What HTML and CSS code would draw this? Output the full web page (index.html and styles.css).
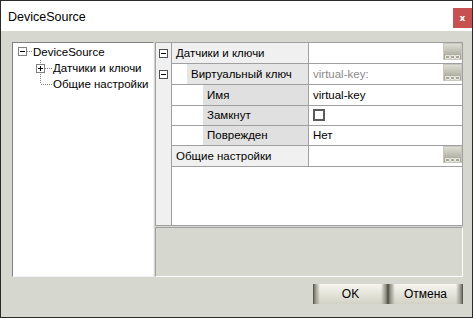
FILE: index.html
```html
<!DOCTYPE html>
<html>
<head>
<meta charset="utf-8">
<link rel="stylesheet" href="styles.css">
</head>
<body>
<div class="window">
  <div class="titlebar">
    <span class="title">DeviceSource</span>
    <div class="close">x</div>
  </div>
  <div class="content">
    <div class="panes">
      <div class="tree">
        <div class="node root">
          <svg class="conn" width="15" height="16" viewBox="0 0 15 16">
            <rect x="0.5" y="3.5" width="8" height="8" fill="#fff" stroke="#808080"/>
            <path d="M2 7.5h5" stroke="#000"/>
            <path d="M9 7.5h5" stroke="#808080" stroke-dasharray="1 1"/>
          </svg>
          <span class="label">DeviceSource</span>
        </div>
        <div class="node child">
          <svg class="conn" width="16" height="16" viewBox="0 0 16 16">
            <path d="M4.5 0v16" stroke="#808080" stroke-dasharray="1 1"/>
            <path d="M9 8.5h7" stroke="#808080" stroke-dasharray="1 1"/>
            <rect x="0.5" y="4.5" width="8" height="8" fill="#fff" stroke="#808080"/>
            <path d="M2 8.5h5M4.5 6v5" stroke="#000"/>
          </svg>
          <span class="label">Датчики и ключи</span>
        </div>
        <div class="node child">
          <svg class="conn" width="16" height="16" viewBox="0 0 16 16">
            <path d="M4.5 0v8" stroke="#808080" stroke-dasharray="1 1"/>
            <path d="M5 8.5h11" stroke="#808080" stroke-dasharray="1 1"/>
          </svg>
          <span class="label">Общие настройки</span>
        </div>
      </div>
      <div class="right">
        <div class="grid">
          <div class="row">
            <div class="gut"><span class="box"></span></div>
            <div class="cells">
              <div class="name"><span class="lbl cat">Датчики и ключи</span></div>
              <div class="val"><span class="vtext"></span>
                <svg class="ell" width="19" height="17" viewBox="0 0 19 17"><defs><linearGradient id="g1" x1="0" y1="0" x2="0" y2="1"><stop offset="0" stop-color="#e2e2da"/><stop offset="1" stop-color="#9a9a8a"/></linearGradient></defs><rect width="19" height="17" fill="url(#g1)"/><rect x="0.5" y="0.5" width="18" height="16" fill="none" stroke="#c8c8c0"/><path d="M2.5 12.5h4v3h-4zM7.5 12.5h4v3h-4zM12.5 12.5h4v3h-4z" fill="none" stroke="#e8e8e0"/></svg>
              </div>
            </div>
          </div>
          <div class="row">
            <div class="gut"><span class="box"></span></div>
            <div class="cells">
              <div class="name"><span class="indent i1"></span><span class="lbl sub">Виртуальный ключ</span></div>
              <div class="val"><span class="vtext muted">virtual-key:</span>
                <svg class="ell" width="19" height="17" viewBox="0 0 19 17"><defs><linearGradient id="g2" x1="0" y1="0" x2="0" y2="1"><stop offset="0" stop-color="#e2e2da"/><stop offset="1" stop-color="#9a9a8a"/></linearGradient></defs><rect width="19" height="17" fill="url(#g2)"/><rect x="0.5" y="0.5" width="18" height="16" fill="none" stroke="#c8c8c0"/><path d="M2.5 12.5h4v3h-4zM7.5 12.5h4v3h-4zM12.5 12.5h4v3h-4z" fill="none" stroke="#e8e8e0"/></svg>
              </div>
            </div>
          </div>
          <div class="row">
            <div class="gut"></div>
            <div class="cells">
              <div class="name"><span class="indent i2"></span><span class="lbl leaf">Имя</span></div>
              <div class="val"><span class="vtext">virtual-key</span></div>
            </div>
          </div>
          <div class="row short">
            <div class="gut"></div>
            <div class="cells">
              <div class="name"><span class="indent i2"></span><span class="lbl leaf">Замкнут</span></div>
              <div class="val"><span class="check"></span></div>
            </div>
          </div>
          <div class="row short">
            <div class="gut"></div>
            <div class="cells">
              <div class="name"><span class="indent i2"></span><span class="lbl leaf">Поврежден</span></div>
              <div class="val"><span class="vtext">Нет</span></div>
            </div>
          </div>
          <div class="row">
            <div class="gut"></div>
            <div class="cells">
              <div class="name"><span class="lbl cat">Общие настройки</span></div>
              <div class="val"><span class="vtext"></span>
                <svg class="ell" width="19" height="17" viewBox="0 0 19 17"><defs><linearGradient id="g3" x1="0" y1="0" x2="0" y2="1"><stop offset="0" stop-color="#e2e2da"/><stop offset="1" stop-color="#9a9a8a"/></linearGradient></defs><rect width="19" height="17" fill="url(#g3)"/><rect x="0.5" y="0.5" width="18" height="16" fill="none" stroke="#c8c8c0"/><path d="M2.5 12.5h4v3h-4zM7.5 12.5h4v3h-4zM12.5 12.5h4v3h-4z" fill="none" stroke="#e8e8e0"/></svg>
              </div>
            </div>
          </div>
          <div class="filler">
            <div class="gut"></div>
            <div class="blank"></div>
          </div>
        </div>
        <div class="desc"></div>
      </div>
    </div>
    <div class="actions">
      <div class="btn">OK</div>
      <div class="btn">Отмена</div>
    </div>
  </div>
</div>
</body>
</html>
```

FILE: styles.css
```css
* { box-sizing: border-box; }
html, body { margin: 0; padding: 0; }
body {
  width: 473px;
  height: 318px;
  font-family: "Liberation Sans", Arial, sans-serif;
  font-size: 12px;
  color: #000;
}
.window {
  width: 473px;
  height: 318px;
  border: 1px solid #2a2a2a;
  background: #d6d7cf;
  display: flex;
  flex-direction: column;
}
.titlebar {
  height: 30px;
  flex: none;
  background: #fff;
  display: flex;
  justify-content: space-between;
  align-items: flex-start;
}
.title {
  font-size: 12.5px;
  line-height: 14px;
  margin: 9px 0 0 7px;
}
.close {
  width: 19px;
  height: 20px;
  margin-top: 7px;
  background: #c75050;
  color: #fff;
  font: bold 9px "DejaVu Sans", sans-serif;
  display: flex;
  align-items: center;
  justify-content: center;
}
.content {
  flex: 1;
  padding: 11px 9px 0 11px;
  display: flex;
  flex-direction: column;
}
.panes {
  display: flex;
  gap: 1px;
  height: 235px;
}
.tree {
  width: 142px;
  background: #fff;
  border: 1px solid;
  border-color: #808080 #f4f4f4 #f4f4f4 #808080;
  padding-top: 1px;
  font-size: 11.5px;
}
.node {
  height: 16px;
  display: flex;
  align-items: center;
}
.root { padding-left: 5px; }
.child { padding-left: 23px; }
.child .label { margin-left: 1px; }
.conn { flex: none; display: block; }
.label { white-space: nowrap; }

.right {
  width: 308px;
  display: flex;
  flex-direction: column;
  gap: 1px;
}
.grid {
  height: 184px;
  border: 1px solid #a0a0a0;
  background: #fff;
  display: flex;
  flex-direction: column;
  font-size: 11.5px;
}
.row {
  height: 21px;
  display: flex;
  flex: none;
}
.row.short { height: 20px; }
.gut {
  width: 15px;
  flex: none;
  background: #f0f0f0;
  display: flex;
  justify-content: center;
  padding-top: 6px;
}
.box {
  width: 9px;
  height: 9px;
  border: 1px solid #505050;
  background: #fff linear-gradient(#000, #000) center / 5px 1px no-repeat;
}
.cells {
  flex: 1;
  display: flex;
  border-left: 1px solid #a0a0a0;
  border-bottom: 1px solid #a0a0a0;
}
.name {
  width: 137px;
  flex: none;
  display: flex;
  border-right: 1px solid #a0a0a0;
}
.indent { flex: none; background: #fff; }
.i1 { width: 15px; }
.i2 { width: 31px; }
.lbl {
  flex: 1;
  padding-left: 4px;
  line-height: 20px;
  white-space: nowrap;
}
.short .lbl, .short .vtext { line-height: 19px; }
.cat { background: #f0f0f0; }
.sub { background: #e6e6e6; }
.leaf { background: #e0e0e0; }
.val {
  flex: 1;
  display: flex;
  align-items: flex-start;
  padding-left: 4px;
}
.vtext {
  flex: 1;
  line-height: 20px;
  white-space: nowrap;
}
.muted { color: #8a8a8a; }
.ell { flex: none; display: block; }
.check {
  width: 12px;
  height: 12px;
  margin-top: 3px;
  border: 2px solid #5a5a5a;
  background: #fff;
}
.filler {
  flex: 1;
  display: flex;
}
.filler .gut { padding: 0; }
.blank {
  flex: 1;
  border-left: 1px solid #a0a0a0;
}
.desc {
  flex: 1;
  border: 1px solid;
  border-color: #a0a0a0 #fff #fff #a0a0a0;
}
.actions {
  display: flex;
  justify-content: flex-end;
  margin-top: 7px;
}
.btn {
  width: 75px;
  height: 20px;
  display: flex;
  align-items: center;
  justify-content: center;
  font-size: 12px;
  background:
    linear-gradient(to right, #4a4a42 0, #8e8e82 2px, rgba(200,200,190,0) 7px, rgba(200,200,190,0) calc(100% - 7px), #8e8e82 calc(100% - 2px), #4a4a42 100%),
    linear-gradient(#f6f6f0, #d2d2c6);
}
```
